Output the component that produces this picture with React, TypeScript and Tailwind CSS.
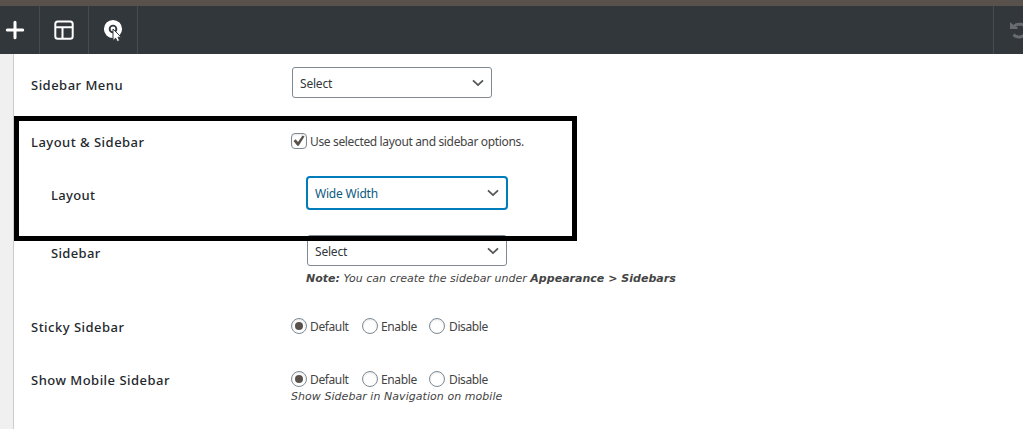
import type { ReactNode } from 'react';

function Chevron() {
  return (
    <svg width="12" height="8" viewBox="0 0 12 8" fill="none" stroke="#555" strokeWidth="1.8">
      <path d="M1 1.3 L6 6.1 L11 1.3" />
    </svg>
  );
}

function SelectBox({ children, active = false }: { children: ReactNode; active?: boolean }) {
  return (
    <div
      className={
        active
          ? 'flex h-[34px] w-[202px] shrink-0 items-center justify-between rounded-[4px] border-2 border-[#007cba] bg-white px-[7px] text-[#0a5a80]'
          : 'flex h-[31px] w-[200px] shrink-0 items-center justify-between rounded-[3px] border border-[#7e8993] bg-white px-[7px] text-[#32373c]'
      }
    >
      <span className="pt-[2px] text-[12px] leading-[16px] tracking-[-0.2px]">{children}</span>
      <Chevron />
    </div>
  );
}

function Radio({ checked = false }: { checked?: boolean }) {
  return (
    <span className="flex h-[16px] w-[16px] items-center justify-center rounded-full border border-[#7e8993] bg-white shadow-[inset_0_1px_2px_rgba(0,0,0,0.1)]">
      {checked && <span className="h-[8px] w-[8px] rounded-full bg-[#59524c]" />}
    </span>
  );
}

function RadioGroup() {
  return (
    <div className="flex h-[16px] items-center text-[12px] leading-[16px] tracking-[-0.38px]">
      <div className="flex w-[71px] items-center gap-[3px]">
        <Radio checked />
        <span className="pt-[2px]">Default</span>
      </div>
      <div className="flex w-[67px] items-center gap-[3px]">
        <Radio />
        <span className="pt-[2px]">Enable</span>
      </div>
      <div className="flex items-center gap-[4px]">
        <Radio />
        <span className="pt-[2px]">Disable</span>
      </div>
    </div>
  );
}

function Label({ children, nested = false }: { children: ReactNode; nested?: boolean }) {
  return (
    <div
      className={
        nested
          ? 'w-[293px] shrink-0 pl-[37px] text-[13px] leading-[20px] font-medium tracking-[0.35px] text-[#23282d]'
          : 'w-[277px] shrink-0 pl-[17px] text-[13px] leading-[20px] font-medium tracking-[0.48px] text-[#23282d]'
      }
    >
      {children}
    </div>
  );
}

function Toolbar() {
  return (
    <header className="flex h-[54px] shrink-0 justify-between border-t-[6px] border-[#59524c] bg-[#32373c]">
      <div className="flex">
        <div className="flex w-[40px] items-center border-r border-[#464b50] pl-[5px]">
          <svg width="20" height="20" viewBox="0 0 20 20" stroke="white" strokeWidth="3" strokeLinecap="round">
            <path d="M10 2.3V17.7M2.3 10H17.7" />
          </svg>
        </div>
        <div className="flex w-[49px] items-center justify-center border-r border-[#464b50]">
          <svg width="20" height="20" viewBox="0 0 20 20" fill="none" stroke="white" strokeWidth="2">
            <rect x="1.3" y="1.5" width="17.4" height="17.2" rx="2.5" />
            <path d="M2 7.3H18M8.5 7.5V18" />
          </svg>
        </div>
        <div className="flex w-[49px] items-center justify-center border-r border-[#464b50]">
          <svg width="20" height="24" viewBox="0 0 20 24">
            <circle cx="10" cy="11" r="6.7" fill="none" stroke="white" strokeWidth="4.8" />
            <circle cx="10" cy="11" r="2.4" fill="white" />
            <path d="M10 11V22.6L12.6 20.2L14.4 23.6L16.6 22.6L15 19.2H18.3Z" fill="white" stroke="#32373c" strokeWidth="1" />
          </svg>
        </div>
      </div>
      <div className="flex w-[30px] items-center overflow-hidden border-l border-[#464b50] pl-[16px]">
        <svg className="shrink-0" width="20" height="18" viewBox="0 0 20 18" fill="none" stroke="#686b6f" strokeWidth="3">
          <path d="M4 5.2C7 2.2 16 2 16 9C16 16 8 18 3.4 13.7" />
          <path d="M0 1V8H7.5V5.7H5.5Z" fill="#686b6f" stroke="none" />
        </svg>
      </div>
    </header>
  );
}

export default function App() {
  return (
    <div className="relative flex h-[429px] w-[1023px] flex-col overflow-hidden bg-white font-['Noto_Sans',sans-serif] text-[#444]">
      <Toolbar />
      <div className="flex flex-1">
        <aside className="w-[14px] shrink-0 border-r border-[#ccc] bg-[#f0f0f0]" />
        <main className="flex flex-1 flex-col">
          <div className="flex h-[62px] shrink-0 pt-[13px]">
            <Label><span className="block pt-[8px]">Sidebar Menu</span></Label>
            <div className="pl-px"><SelectBox>Select</SelectBox></div>
          </div>
          <div className="flex h-[52px] shrink-0 items-center">
            <Label>Layout &amp; Sidebar</Label>
            <div className="flex items-center gap-[3px] pb-[2px]">
              <span className="flex h-[16px] w-[16px] items-center justify-center rounded-[4px] border border-[#7e8993] shadow-[inset_0_1px_2px_rgba(0,0,0,0.1)]">
                <svg width="14" height="14" viewBox="0 0 14 14" fill="#59524c">
                  <path d="M1.5 7L3.7 5.2L6 8L10.5 1.5L12.5 2.5L6.7 11.8H5.3Z" />
                </svg>
              </span>
              <span className="pt-[2px] text-[12px] leading-[16px] tracking-[-0.35px]">Use selected layout and sidebar options.</span>
            </div>
          </div>
          <div className="flex h-[54px] shrink-0 pt-[8px]">
            <Label nested><span className="block pt-[9px]">Layout</span></Label>
            <div className="-ml-px"><SelectBox active>Wide Width</SelectBox></div>
          </div>
          <div className="flex h-[82px] shrink-0 pt-[13px]">
            <Label nested><span className="block pt-[8px]">Sidebar</span></Label>
            <div>
              <SelectBox>Select</SelectBox>
              <p className="-ml-px pt-[5px] font-['DejaVu_Sans',sans-serif] text-[11px] leading-[16px] tracking-[0.02px] whitespace-nowrap italic">
                <b>Note:</b> You can create the sidebar under <b>Appearance &gt; Sidebars</b>
              </p>
            </div>
          </div>
          <div className="flex h-[53px] shrink-0 pt-[14px]">
            <Label><span className="-mt-px block">Sticky Sidebar</span></Label>
            <RadioGroup />
          </div>
          <div className="flex flex-1 pt-[14px]">
            <Label><span className="-mt-px block">Show Mobile Sidebar</span></Label>
            <div>
              <RadioGroup />
              <p className="pt-px font-['DejaVu_Sans',sans-serif] text-[11px] leading-[18px] tracking-[0.05px] whitespace-nowrap italic">
                Show Sidebar in Navigation on mobile
              </p>
            </div>
          </div>
        </main>
      </div>
      <div className="pointer-events-none absolute top-[116px] left-[14px] h-[125px] w-[563px] border-[5px] border-black" />
    </div>
  );
}
